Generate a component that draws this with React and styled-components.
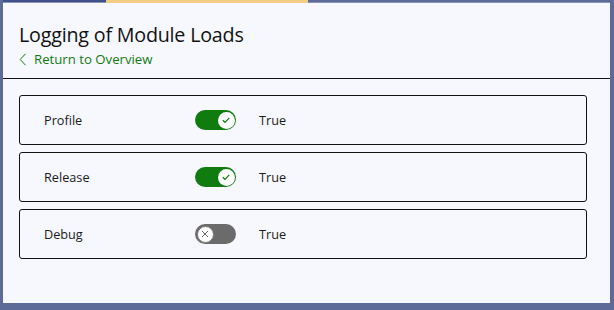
import React from 'react';
import styled, { createGlobalStyle } from 'styled-components';

const GlobalStyle = createGlobalStyle`
    html, body {
        margin: 0;
        padding: 0;
        background: #5d6b99;
    }
    body {
        font-family: "Open Sans", "Noto Sans", sans-serif;
    }
`;

const Frame = styled.div`
    width: 614px;
    height: 310px;
    padding: 0 4px 7px 3px;
    box-sizing: border-box;
`;

const Window = styled.main`
    height: 303px;
    background: #f7f8fe;
    display: flex;
    flex-direction: column;
`;

const TabStrip = styled.div`
    display: flex;
    height: 3px;
`;

const TabSegment = styled.div`
    width: ${p => p.$width || 'auto'};
    flex: ${p => (p.$width ? 'none' : 1)};
    background: ${p => p.$color};
    border-bottom: ${p => (p.$active ? 'none' : '1px solid #8a93b3')};
    box-sizing: border-box;
`;

const Header = styled.header`
    padding: 19px 16px 0;
    height: 56px;
    border-bottom: 1px solid #111;
`;

const Title = styled.h1`
    margin: 0;
    font-size: 19.7px;
    font-weight: 400;
    line-height: 25px;
    color: #111;
    letter-spacing: -0.2px;
`;

const BackLink = styled.a`
    display: inline-flex;
    align-items: center;
    gap: 7px;
    margin-top: 4px;
    color: #107c10;
    font-size: 13.2px;
    line-height: 16px;
    text-decoration: none;
    cursor: pointer;
`;

const Settings = styled.section`
    display: flex;
    flex-direction: column;
    gap: 7px;
    padding: 16px 23px 0 16px;
`;

const Card = styled.div`
    height: 50px;
    box-sizing: border-box;
    border: 1px solid #111;
    border-radius: 3px;
    display: grid;
    grid-template-columns: 151px 64px 1fr;
    align-items: center;
    padding-left: 24px;
    font-size: 12.7px;
    color: #1b1b1b;
`;

const Label = styled.span``;

const Track = styled.span`
    width: 41px;
    height: 20px;
    border-radius: 10px;
    box-sizing: border-box;
    background: ${p => (p.$on ? '#107c10' : '#6b6b6b')};
    display: flex;
    align-items: center;
    justify-content: ${p => (p.$on ? 'flex-end' : 'flex-start')};
    padding: 0 1.5px;
`;

const Knob = styled.span`
    width: 17px;
    height: 17px;
    border-radius: 50%;
    background: #fff;
    display: flex;
    align-items: center;
    justify-content: center;
    box-sizing: border-box;
    border: ${p => (p.$on ? 'none' : '1.5px solid #7a7a7a')};
`;

const Value = styled.span``;

const rows = [
    { name: 'Profile', on: true },
    { name: 'Release', on: true },
    { name: 'Debug', on: false },
];

const Toggle = ({ on }) => (
    <Track $on={on}>
        <Knob $on={on}>
            {on ? (
                <svg width="10" height="10" viewBox="0 0 10 10">
                    <path d="M1.8 5.2 L4 7.3 L8.3 2.8" fill="none" stroke="#107c10" strokeWidth="1.2" />
                </svg>
            ) : (
                <svg width="8" height="8" viewBox="0 0 8 8">
                    <path d="M1 1 L7 7 M7 1 L1 7" fill="none" stroke="#666" strokeWidth="1" />
                </svg>
            )}
        </Knob>
    </Track>
);

export default function App() {
    return (
        <>
            <GlobalStyle />
            <Frame>
                <Window>
                    <TabStrip>
                        <TabSegment $width="103px" $color="#40508a" />
                        <TabSegment $width="202px" $color="#f5cc84" $active />
                        <TabSegment $color="#5d6b99" />
                    </TabStrip>
                    <Header>
                        <Title>Logging of Module Loads</Title>
                        <BackLink>
                            <svg width="8" height="13" viewBox="0 0 8 13">
                                <path d="M6.5 0.8 L1.2 6.5 L6.5 12.2" fill="none" stroke="#107c10" strokeWidth="1" />
                            </svg>
                            Return to Overview
                        </BackLink>
                    </Header>
                    <Settings>
                        {rows.map(r => (
                            <Card key={r.name}>
                                <Label>{r.name}</Label>
                                <Toggle on={r.on} />
                                <Value>True</Value>
                            </Card>
                        ))}
                    </Settings>
                </Window>
            </Frame>
        </>
    );
}
